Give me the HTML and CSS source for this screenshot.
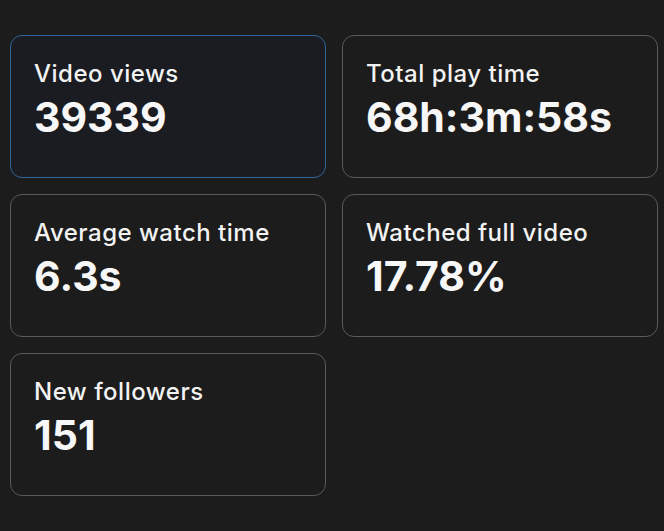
FILE: index.html
```html
<!DOCTYPE html>
<html lang="en">
<head>
<meta charset="utf-8">
<link rel="stylesheet" href="styles.css">
</head>
<body>
<div class="grid">
  <div class="card active">
    <div class="label">Video views</div>
    <div class="value">39339</div>
  </div>
  <div class="card">
    <div class="label">Total play time</div>
    <div class="value">68h:3m:58s</div>
  </div>
  <div class="card">
    <div class="label">Average watch time</div>
    <div class="value">6.3s</div>
  </div>
  <div class="card">
    <div class="label">Watched full video</div>
    <div class="value">17.78%</div>
  </div>
  <div class="card">
    <div class="label">New followers</div>
    <div class="value">151</div>
  </div>
</div>
</body>
</html>
```
FILE: styles.css
```css
html, body {
  margin: 0;
  padding: 0;
  background: #1c1c1c;
  width: 664px;
  height: 531px;
  overflow: hidden;
}
body {
  font-family: Inter, "Liberation Sans", sans-serif;
  color: #f2f2f2;
}
.grid {
  display: grid;
  grid-template-columns: 316px 316px;
  grid-auto-rows: 143px;
  gap: 16px;
  padding: 35px 0 0 10px;
}
.card {
  box-sizing: border-box;
  border: 1.5px solid #5a5a5a;
  border-radius: 12px;
  padding: 23px 23px;
  background: #1c1c1c;
}
.card.active {
  border-color: #30689d;
  background: #1a1c21;
}
.label {
  font-size: 24px;
  font-weight: 500;
  line-height: 30px;
  letter-spacing: 0.5px;
}
.value {
  font-size: 41px;
  font-weight: 700;
  line-height: 46px;
  margin-top: 5px;
  color: #f7f7f7;
}
```
